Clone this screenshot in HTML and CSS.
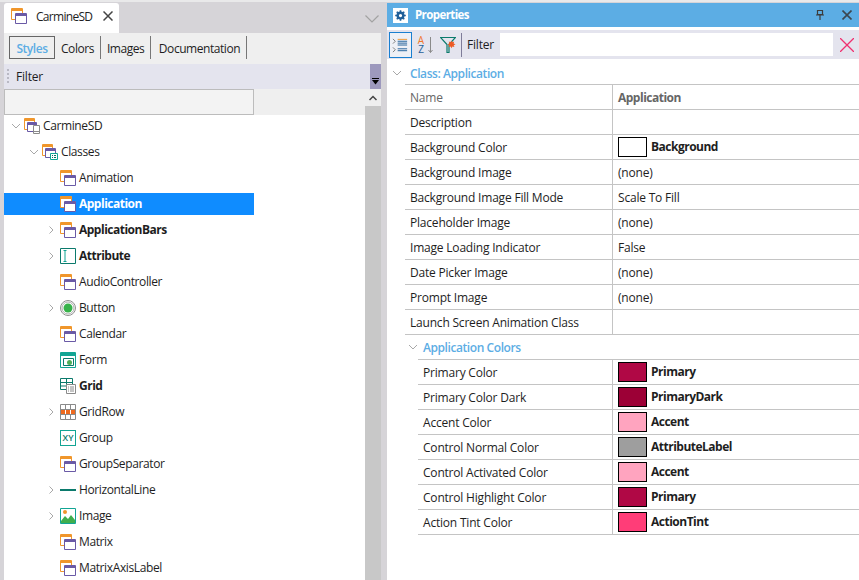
FILE: index.html
```html
<!DOCTYPE html>
<html lang="en">

<head>
    <meta charset="UTF-8">
    <title>CarmineSD - Properties</title>
    <link rel="stylesheet" href="styles.css">
</head>

<body>

    <!-- shared icons -->
    <svg class="defs" width="0" height="0">
        <symbol id="i-style" viewBox="0 0 16 16">
            <path d="M.5.500h11v11H.5z" fill="#fff" stroke="#f0962b"/>
            <path d="M1 1h10v2H1z" fill="#f0962b"/>
            <path d="M4.500 5.500h11v10h-11z" fill="#fff" stroke="#6a5aa6"/>
            <path d="M5 6h10v2H5z" fill="#6a5aa6"/>
        </symbol>
        <symbol id="i-device" viewBox="0 0 16 16">
            <path d="M.5.500h10v11H.5z" fill="#fff" stroke="#f0962b"/>
            <path d="M1 1h9v2H1z" fill="#f0962b"/>
            <path d="M3.500 4.500h9v9h-9z" fill="#fff" stroke="#6a5aa6"/>
            <path d="M4 5h8v2H4z" fill="#6a5aa6"/>
            <path d="M9.500 7.500h6v8h-6z" fill="#fff" stroke="#8a8a8a"/>
            <path d="M10 13.500h5" stroke="#8a8a8a"/>
        </symbol>
        <symbol id="i-classes" viewBox="0 0 16 16">
            <path d="M.5.500h10v11H.5z" fill="#fff" stroke="#f0962b"/>
            <path d="M1 1h9v2H1z" fill="#f0962b"/>
            <path d="M3.500 4.500h10v9h-10z" fill="#fff" stroke="#6a5aa6"/>
            <path d="M4 5h9v2H4z" fill="#6a5aa6"/>
            <path d="M8.500 9.500h7v6h-7z" fill="#fff" stroke="#12a594"/>
            <path d="M10 11.500h1M12 11.500h2M10 13.500h1M12 13.500h2" stroke="#0b6e62"/>
        </symbol>
        <symbol id="i-attr" viewBox="0 0 16 16">
            <path d="M.5.500h15v15H.5z" fill="#fff" stroke="#0b7a6c"/>
            <path d="M3.500 2.500h3M3.500 13.500h3M5 3v10" fill="none" stroke="#12a594"/>
        </symbol>
        <symbol id="i-button" viewBox="0 0 16 16">
            <circle cx="8" cy="8" r="7.500" fill="#fff" stroke="#8f8f8f"/>
            <circle cx="8" cy="8" r="6" fill="#fff" stroke="#b0b0b0"/>
            <circle cx="8" cy="8" r="4.500" fill="#37b24a"/>
        </symbol>
        <symbol id="i-form" viewBox="0 0 16 16">
            <path d="M.5.500h15v15H.5z" fill="#fff" stroke="#12a594"/>
            <path d="M1 1h14v3H1z" fill="#12a594"/>
            <path d="M3.500 6.500h10v7h-10z" fill="#fff" stroke="#0b7a6c"/>
            <circle cx="9.500" cy="10.500" r="2.500" fill="#4fae5a"/>
        </symbol>
        <symbol id="i-grid" viewBox="0 0 16 16">
            <path d="M.5.500h12v11H.5zM.5 4.500h12M.5 8h6M6.500.5v11" fill="#fff" stroke="#0b7a6c"/>
            <path d="M6.500 6.500h9v9h-9z" fill="#fff" stroke="#8a8a8a"/>
            <path d="M8 9h1M10 9h4M8 11h1M10 11h4M8 13h1M10 13h4" stroke="#8a8a8a"/>
        </symbol>
        <symbol id="i-gridrow" viewBox="0 0 16 16">
            <path d="M.5.500h15v15H.5zM5.500.5v15M10.500.5v15" fill="#fff" stroke="#8a8a8a"/>
            <path d="M1 5h14v5H1z" fill="#ee6a1f"/>
            <path d="M5.500 5v5M10.500 5v5" stroke="#fff"/>
            <path d="M.5 5.500h15M.5 10.500h15" stroke="#8a8a8a"/>
        </symbol>
        <symbol id="i-line" viewBox="0 0 16 16">
            <path d="M0 8h16" stroke="#0b7a6c" stroke-width="2"/>
        </symbol>
        <symbol id="i-image" viewBox="0 0 16 16">
            <path d="M.5.500h15v15H.5z" fill="#fff" stroke="#12a594"/>
            <circle cx="5" cy="4" r="2" fill="#f0962b"/>
            <path d="M1 15v-2l4-5 3 3 3-4 4 5v3z" fill="#3fae4d"/>
        </symbol>
        <symbol id="i-open" viewBox="0 0 8 8">
            <path d="M2.500 .5 6 4 2.500 7.500" fill="none" stroke="#a8a8a8"/>
        </symbol>
        <symbol id="i-shut" viewBox="0 0 10 8">
            <path d="M1 2l4 4 4-4" fill="none" stroke="#a8a8a8"/>
        </symbol>
    </svg>

    <div class="app">

        <!-- left panel -->
        <section class="left">
            <div class="tabbar">
                <div class="doc-tab">
                    <svg class="ico"><use href="#i-style"/></svg>
                    <span class="doc-name">CarmineSD</span>
                    <svg class="doc-close" viewBox="0 0 10 10"><path d="M.5.500l9 9M9.500.5l-9 9" stroke="#444" stroke-width="1.500"/></svg>
                </div>
                <svg class="tabbar-more" viewBox="0 0 14 8"><path d="M.5.500 7 7 13.500.5" fill="none" stroke="#a2a2a2" stroke-width="1.200"/></svg>
            </div>

            <nav class="subtabs">
                <span class="subtab active">Styles</span>
                <span class="subtab">Colors</span>
                <span class="subtab">Images</span>
                <span class="subtab last">Documentation</span>
            </nav>

            <div class="filterbar">
                <span class="grip"></span>
                <span class="filterbar-text">Filter</span>
                <span class="filterbar-drop">
                    <svg viewBox="0 0 7 7"><path d="M0 .5h7" stroke="#000"/><path d="M0 2h7L3.500 6.500z" fill="#000"/></svg>
                </span>
            </div>

            <div class="left-body">
                <div class="left-main">
                    <div class="search-row"><div class="search-box"></div></div>
                    <ul class="tree">
                        <li class="node"><svg class="arrow shut"><use href="#i-shut"/></svg><svg class="ico"><use href="#i-device"/></svg><span class="label">CarmineSD</span></li>
                        <li class="node lvl1"><svg class="arrow shut"><use href="#i-shut"/></svg><svg class="ico"><use href="#i-classes"/></svg><span class="label">Classes</span></li>
                        <li class="node lvl2"><span class="arrow"></span><svg class="ico"><use href="#i-style"/></svg><span class="label">Animation</span></li>
                        <li class="node lvl2 selected"><span class="arrow"></span><svg class="ico"><use href="#i-style"/></svg><span class="label">Application</span></li>
                        <li class="node lvl2 strong"><svg class="arrow"><use href="#i-open"/></svg><svg class="ico"><use href="#i-style"/></svg><span class="label">ApplicationBars</span></li>
                        <li class="node lvl2 strong"><svg class="arrow"><use href="#i-open"/></svg><svg class="ico"><use href="#i-attr"/></svg><span class="label">Attribute</span></li>
                        <li class="node lvl2"><span class="arrow"></span><svg class="ico"><use href="#i-style"/></svg><span class="label">AudioController</span></li>
                        <li class="node lvl2"><svg class="arrow"><use href="#i-open"/></svg><svg class="ico"><use href="#i-button"/></svg><span class="label">Button</span></li>
                        <li class="node lvl2"><span class="arrow"></span><svg class="ico"><use href="#i-style"/></svg><span class="label">Calendar</span></li>
                        <li class="node lvl2"><span class="arrow"></span><svg class="ico"><use href="#i-form"/></svg><span class="label">Form</span></li>
                        <li class="node lvl2 strong"><span class="arrow"></span><svg class="ico"><use href="#i-grid"/></svg><span class="label">Grid</span></li>
                        <li class="node lvl2"><svg class="arrow"><use href="#i-open"/></svg><svg class="ico"><use href="#i-gridrow"/></svg><span class="label">GridRow</span></li>
                        <li class="node lvl2"><span class="arrow"></span><span class="ico xy-icon">XY</span><span class="label">Group</span></li>
                        <li class="node lvl2"><span class="arrow"></span><svg class="ico"><use href="#i-style"/></svg><span class="label">GroupSeparator</span></li>
                        <li class="node lvl2"><svg class="arrow"><use href="#i-open"/></svg><svg class="ico"><use href="#i-line"/></svg><span class="label">HorizontalLine</span></li>
                        <li class="node lvl2"><svg class="arrow"><use href="#i-open"/></svg><svg class="ico"><use href="#i-image"/></svg><span class="label">Image</span></li>
                        <li class="node lvl2"><span class="arrow"></span><svg class="ico"><use href="#i-style"/></svg><span class="label">Matrix</span></li>
                        <li class="node lvl2"><span class="arrow"></span><svg class="ico"><use href="#i-style"/></svg><span class="label">MatrixAxisLabel</span></li>
                    </ul>
                </div>
                <div class="scrollbar">
                    <div class="scroll-up"><svg viewBox="0 0 8 6"><path d="M.5 5 4 1.500 7.500 5" fill="none" stroke="#444" stroke-width="1.500"/></svg></div>
                    <div class="scroll-thumb"></div>
                </div>
            </div>
        </section>

        <!-- properties panel -->
        <section class="props">
            <header class="props-title">
                <span class="gear-box">
                    <svg viewBox="0 0 16 16"><circle cx="8" cy="8" r="3.500" fill="none" stroke="#1f5f99" stroke-width="3"/><path d="M8 1.500v13M1.500 8h13M3.400 3.400l9.200 9.200M12.600 3.400l-9.200 9.200" stroke="#1f5f99" stroke-width="2" stroke-dasharray="2.500 8"/></svg>
                </span>
                <span class="props-name">Properties</span>
                <svg class="pin" viewBox="0 0 8 10"><path d="M1.500.5h5v4h-5zM0 5h8M4 5v5" fill="none" stroke="#3c3c3c" stroke-width="1.200"/></svg>
                <svg class="title-close" viewBox="0 0 10 10"><path d="M.5.500l9 9M9.500.5l-9 9" stroke="#3c4650" stroke-width="1.600"/></svg>
            </header>

            <div class="props-tools">
                <span class="tool tool-on">
                    <svg viewBox="0 0 18 18">
                        <path d="M1 2l2.500 2.500L1 7M1 11l2.500 2.500L1 16" fill="none" stroke="#777"/>
                        <path d="M6 2.500h10" stroke="#f0962b"/>
                        <path d="M6 4.500h10M6 6.500h10M6 8.500h10M6 12.500h10M6 14.500h10" stroke="#1f5f99"/>
                    </svg>
                </span>
                <span class="tool-sort">
                    <span class="az-col"><span class="az-a">A</span><span class="az-z">Z</span></span>
                    <svg viewBox="0 0 5 18"><path d="M2.500 1v15.500M.5 14l2 2.500 2-2.500" fill="none" stroke="#8a8a8a"/></svg>
                </span>
                <span class="tool-funnel">
                    <svg viewBox="0 0 16 16">
                        <path d="M.5 .5h15L9 7.500V15.500H7V7.500z" fill="none" stroke="#0b7a6c" stroke-width="1.200"/>
                        <path d="M11.500 3.500l.8 1.800 1.900-.8-.6 2 1.900.8-1.800.9.7 1.900-2-.6-.9 1.800-.9-1.800-2 .6.700-1.900-1.800-.9 1.900-.8-.6-2 1.900.8z" fill="#ee5a24"/>
                    </svg>
                </span>
                <span class="tool-sep"></span>
                <span class="tool-label">Filter</span>
                <div class="tool-input"></div>
                <svg class="tool-clear" viewBox="0 0 14 14"><path d="M0 0l14 14M14 0 0 14" stroke="#f0306f" stroke-width="1.300"/></svg>
            </div>

            <div class="group-head">
                <svg class="arrow shut"><use href="#i-shut"/></svg>
                <span>Class: Application</span>
            </div>
            <div class="grid">
                <div class="prop muted"><div class="k">Name</div><div class="v strong">Application</div></div>
                <div class="prop"><div class="k">Description</div><div class="v"></div></div>
                <div class="prop"><div class="k">Background Color</div><div class="v strong"><i class="swatch c-white"></i>Background</div></div>
                <div class="prop"><div class="k">Background Image</div><div class="v">(none)</div></div>
                <div class="prop"><div class="k">Background Image Fill Mode</div><div class="v">Scale To Fill</div></div>
                <div class="prop"><div class="k">Placeholder Image</div><div class="v">(none)</div></div>
                <div class="prop"><div class="k">Image Loading Indicator</div><div class="v">False</div></div>
                <div class="prop"><div class="k">Date Picker Image</div><div class="v">(none)</div></div>
                <div class="prop"><div class="k">Prompt Image</div><div class="v">(none)</div></div>
                <div class="prop"><div class="k">Launch Screen Animation Class</div><div class="v"></div></div>
            </div>

            <div class="group-head sub">
                <svg class="arrow shut"><use href="#i-shut"/></svg>
                <span>Application Colors</span>
            </div>
            <div class="grid sub">
                <div class="prop"><div class="k">Primary Color</div><div class="v strong"><i class="swatch c-primary"></i>Primary</div></div>
                <div class="prop"><div class="k">Primary Color Dark</div><div class="v strong"><i class="swatch c-dark"></i>PrimaryDark</div></div>
                <div class="prop"><div class="k">Accent Color</div><div class="v strong"><i class="swatch c-accent"></i>Accent</div></div>
                <div class="prop"><div class="k">Control Normal Color</div><div class="v strong"><i class="swatch c-label"></i>AttributeLabel</div></div>
                <div class="prop"><div class="k">Control Activated Color</div><div class="v strong"><i class="swatch c-accent"></i>Accent</div></div>
                <div class="prop"><div class="k">Control Highlight Color</div><div class="v strong"><i class="swatch c-primary"></i>Primary</div></div>
                <div class="prop"><div class="k">Action Tint Color</div><div class="v strong"><i class="swatch c-tint"></i>ActionTint</div></div>
            </div>
        </section>

    </div>

</body>

</html>
```

FILE: styles.css
```css
* {
    box-sizing: border-box;
}

html,
body {
    margin: 0;
    height: 100%;
    overflow: hidden;
}

body {
    font-family: "Open Sans", "Noto Sans", sans-serif;
    font-size: 12px;
    letter-spacing: -0.2px;
    color: #1e1e1e;
    background: #d6d4d8;
}

svg {
    display: block;
    flex: none;
}

.defs {
    position: absolute;
}

.app {
    display: flex;
    height: 580px;
    padding-top: 1px;
    border-top: 2px solid #e9e9ea;
}

/* left panel */

.left {
    width: 377px;
    margin-left: 4px;
    margin-right: 6px;
    display: flex;
    flex-direction: column;
}

.ico {
    width: 16px;
    height: 16px;
}

.tabbar {
    height: 30px;
    display: flex;
    align-items: flex-start;
    justify-content: space-between;
}

.doc-tab {
    width: 115px;
    height: 30px;
    padding: 0 0 4px 7px;
    display: flex;
    align-items: center;
    background: #fff;
    border-radius: 3px 3px 0 0;
}

.doc-name {
    margin-left: 9px;
    letter-spacing: -0.7px;
}

.doc-close {
    width: 10px;
    height: 10px;
    margin-left: 11px;
}

.tabbar-more {
    width: 14px;
    height: 8px;
    margin: 12px 2px 0 0;
}

.subtabs {
    height: 31px;
    padding: 3px 0 0 5px;
    display: flex;
    align-items: flex-start;
    background: #efefef;
    letter-spacing: -0.45px;
}

.subtab {
    height: 23px;
    line-height: 25px;
    padding: 0 6px;
    border-right: 1px solid #777;
}

.subtab.last {
    padding-left: 7.5px;
}

.subtab.active {
    width: 46px;
    padding: 0;
    text-align: center;
    color: #5cade4;
    font-weight: 600;
    border: 1px solid #666;
    line-height: 23px;
}

.filterbar {
    height: 25px;
    display: flex;
    align-items: center;
    background: #e4e4ee;
}

.grip {
    width: 2px;
    height: 15px;
    margin-left: 3px;
    background: repeating-linear-gradient(#b9b9c4 0 2px, transparent 2px 4px);
}

.filterbar-text {
    margin-left: 7px;
}

.filterbar-drop {
    margin-left: auto;
    width: 11px;
    height: 25px;
    padding: 14px 2px 0;
    background: #9d99bd;
}

.filterbar-drop svg {
    width: 7px;
    height: 7px;
}

.left-body {
    flex: 1;
    display: flex;
    min-height: 0;
    background: #fff;
}

.left-main {
    width: 361px;
}

.search-row {
    height: 26px;
    background: #efefef;
}

.search-box {
    width: 250px;
    height: 26px;
    background: #f3f3f3;
    border: 1px solid #bcbcbc;
}

.tree {
    list-style: none;
    margin: 0;
    padding: 0;
    letter-spacing: -0.38px;
}

.node {
    width: 250px;
    height: 22px;
    margin-bottom: 4px;
    padding-left: 7px;
    display: flex;
    align-items: center;
    white-space: nowrap;
}

.node.lvl1 {
    padding-left: 25px;
}

.node.lvl2 {
    padding-left: 43px;
}

.node .ico {
    margin-right: 3px;
}

.label {
    padding-bottom: 2px;
}

.node.strong .label,
.node.selected .label {
    font-weight: 700;
    letter-spacing: -0.5px;
}

.node.selected {
    background: #0f8cff;
    color: #fff;
}

.xy-icon {
    display: block;
    line-height: 14px;
    text-align: center;
    font-size: 9px;
    font-weight: 600;
    letter-spacing: 0;
    color: #0b7a6c;
    background: #fff;
    border: 1px solid #12a594;
}

.arrow {
    width: 8px;
    height: 8px;
    margin-right: 5px;
    flex: none;
}

.arrow.shut {
    width: 10px;
    margin-right: 3px;
}

.scrollbar {
    width: 16px;
    display: flex;
    flex-direction: column;
    background: #efefef;
}

.scroll-up {
    height: 17px;
    display: flex;
    align-items: center;
    justify-content: center;
}

.scroll-up svg {
    width: 8px;
    height: 6px;
}

.scroll-thumb {
    flex: 1;
    background: #c8c8c8;
}

/* properties panel */

.props {
    flex: 1;
    min-width: 0;
    background: #fff;
}

.props-title {
    height: 24px;
    padding: 0 7px 0 6px;
    display: flex;
    align-items: center;
    background: #5cade4;
}

.gear-box {
    width: 15px;
    height: 15px;
    padding: 1px;
    background: #fff;
}

.props-name {
    margin-left: 7px;
    color: #fff;
    font-weight: 700;
    font-size: 11.5px;
    letter-spacing: -0.6px;
    padding-bottom: 1px;
}

.pin {
    width: 8px;
    height: 10px;
    margin-left: auto;
    margin-right: 18px;
}

.title-close {
    width: 10px;
    height: 10px;
}

.props-tools {
    height: 29px;
    margin-top: 3px;
    padding-left: 2px;
    display: flex;
    align-items: center;
    background: #e4e4ee;
}

.tool {
    width: 23px;
    height: 26px;
    padding: 4px 2px;
    border: 1px solid #1a7fd0;
    background: #eef0f6;
}

.tool-sort {
    width: 18px;
    margin-left: 5px;
    display: flex;
    align-items: center;
    gap: 3px;
}

.az-col {
    width: 8px;
    display: flex;
    flex-direction: column;
    font-size: 10px;
    line-height: 9px;
    text-align: center;
    letter-spacing: 0;
}

.az-a {
    display: block;
    height: 9px;
    color: #f0762b;
}

.az-z {
    display: block;
    height: 9px;
    color: #1f5f99;
}

.tool-sort svg {
    width: 5px;
    height: 18px;
}

.tool-funnel {
    margin-left: 5px;
    width: 16px;
}

.tool-funnel svg {
    width: 16px;
    height: 16px;
}

.tool-sep {
    width: 1px;
    height: 24px;
    margin-left: 5px;
    background: #7e7c99;
}

.tool-label {
    margin-left: 5px;
}

.tool-input {
    width: 333px;
    height: 23px;
    margin-left: 6px;
    background: #fff;
}

.tool-clear {
    width: 14px;
    height: 14px;
    margin-left: 7px;
}

.group-head {
    height: 25px;
    padding: 3px 0 0 5px;
    display: flex;
    align-items: center;
    color: #5cade4;
    font-weight: 600;
    letter-spacing: -0.42px;
}

.group-head .arrow.shut {
    margin-right: 8px;
}

.group-head.sub {
    height: 24px;
    padding: 0 0 0 21px;
}

.group-head.sub .arrow.shut {
    margin-right: 5px;
}

.grid {
    margin-left: 18px;
    border-top: 1px solid #c4c4c4;
    height: 251px;
}

.grid.sub {
    margin-left: 31px;
    height: 176px;
}

.prop {
    display: grid;
    grid-template-columns: 208px 1fr;
    grid-template-rows: 24px;
    height: 25px;
    border-bottom: 1px solid #c4c4c4;
}

.grid.sub .prop {
    grid-template-columns: 195px 1fr;
}

.k {
    padding-left: 5px;
    line-height: 26px;
    border-right: 1px solid #c4c4c4;
    white-space: nowrap;
}

.v {
    padding-left: 5px;
    line-height: 26px;
    display: flex;
    align-items: flex-start;
    white-space: nowrap;
}

.v.strong {
    font-weight: 700;
    letter-spacing: -0.5px;
    line-height: 24px;
}

.prop.muted .v.strong {
    line-height: 26px;
}

.prop.muted .k,
.prop.muted .v {
    color: #666;
}

.swatch {
    width: 29px;
    height: 20px;
    margin: 2px 4px 0 0;
    border: 1px solid #000;
    flex: none;
}

.c-white {
    background: #fff;
}

.c-primary {
    background: #b00845;
}

.c-dark {
    background: #9c0036;
}

.c-accent {
    background: #ffa4bf;
}

.c-label {
    background: #9e9e9e;
}

.c-tint {
    background: #ff3d78;
}
```
